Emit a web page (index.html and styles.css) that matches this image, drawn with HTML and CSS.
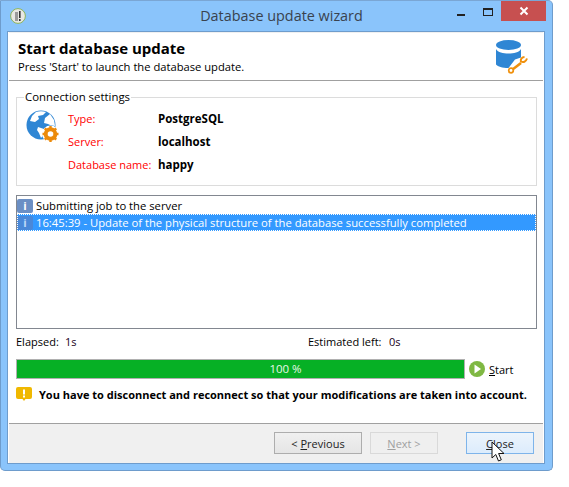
FILE: index.html
```html
<!DOCTYPE html>
<html lang="en">
<head>
  <meta charset="UTF-8">
  <title>Database update wizard</title>
  <link rel="stylesheet" href="styles.css">
</head>
<body>

<div class="window">
  <div class="titlebar">
    <div class="app-icon">
      <svg width="16" height="16" viewBox="0 0 16 16">
        <circle cx="8" cy="8" r="7.4" fill="#e8e8e4" stroke="#8cb45a" stroke-width="1"/>
        <path d="M5 4h3v9H5z" fill="#9a9a9a"/>
        <path d="M9 3h1.6v7H9zM9 11h1.6v2H9z" fill="#333"/>
      </svg>
    </div>
    <div class="title">Database update wizard</div>
    <div class="controls">
      <div class="ctl-min"></div>
      <div class="ctl-max"></div>
      <div class="ctl-close">
        <svg width="10" height="10" viewBox="0 0 10 10"><path d="M1.5 1.5l7 7M8.5 1.5l-7 7" stroke="#fff" stroke-width="2"/></svg>
      </div>
    </div>
  </div>

  <div class="client">
    <div class="header">
      <div>
        <h1>Start database update</h1>
        <p>Press 'Start' to launch the database update.</p>
      </div>
      <svg class="db-icon" width="32" height="34" viewBox="0 0 32 34">
        <ellipse cx="12.500" cy="5" rx="12.500" ry="5" fill="#2f86d4"/>
        <path d="M0 9C2 12.500 7 13.500 12.500 13.500S23 12.500 25 9V17.500L19 19.500 12.500 28C6 28 2 26.500 0 24.500z" fill="#2f86d4"/>
        <path d="M25 23L16.500 29.500" stroke="#f0900c" stroke-width="2.600"/>
        <path d="M28.500 17c-2.500.2-4.200 2-3.600 4.500 2.300 1.300 5 .3 6.100-3" fill="none" stroke="#f0900c" stroke-width="2"/>
        <circle cx="15" cy="30.500" r="2.300" fill="#fff" stroke="#f0900c" stroke-width="1.700"/>
      </svg>
    </div>

    <div class="content">
      <fieldset class="connection">
        <legend>Connection settings</legend>
        <svg class="globe" width="33" height="33" viewBox="0 0 33 33">
          <circle cx="15" cy="15" r="14.500" fill="#2f86d4"/>
          <path d="M10 2c3-1 7-1 10 0l-3 3-5 1 1 3-4 3-5-1 2-5zM19 8l5-4 4 6 1 6-5-1-2-1-4-1zM12 17l6 2 1 4-4 5-2-5-2-3z" fill="#fff"/>
          <circle cx="24.500" cy="24" r="8.500" fill="#fff"/>
          <circle cx="24.500" cy="24" r="5" fill="none" stroke="#ec8a0a" stroke-width="3.600"/>
          <path d="M24.500 16v16M16.500 24h16M18.800 18.300l11.400 11.400M30.200 18.300L18.800 29.700" stroke="#ec8a0a" stroke-width="2.400"/>
          <circle cx="24.500" cy="24" r="2.800" fill="#fff"/>
        </svg>
        <div class="fields">
          <span class="label">Type:</span><span class="value">PostgreSQL</span>
          <span class="label">Server:</span><span class="value">localhost</span>
          <span class="label">Database name:</span><span class="value">happy</span>
        </div>
      </fieldset>

      <div class="log">
        <div class="log-row">
          <span class="info-icon">i</span>
          <span>Submitting job to the server</span>
        </div>
        <div class="log-row selected">
          <span class="info-icon">i</span>
          <span>16:45:39 - Update of the physical structure of the database successfully completed</span>
        </div>
      </div>

      <div class="times">
        <span class="time-label">Elapsed:</span><span class="time-value elapsed">1s</span>
        <span class="time-label time-left">Estimated left:</span><span class="time-value">0s</span>
      </div>

      <div class="progress-row">
        <div class="progress">100 %</div>
        <div class="start">
          <svg width="16" height="16" viewBox="0 0 16 16">
            <circle cx="8" cy="8" r="8" fill="#7fb843"/>
            <path d="M5.500 3.500L12 8l-6.500 4.500z" fill="#fff"/>
          </svg>
          <span><u>S</u>tart</span>
        </div>
      </div>

      <div class="warning">
        <svg width="16" height="14" viewBox="0 0 16 14">
          <path d="M2 0h12a2 2 0 0 1 2 2v8a2 2 0 0 1-2 2H9.500L8 14l-1.500-2H2a2 2 0 0 1-2-2V2a2 2 0 0 1 2-2z" fill="#f0b800"/>
          <path d="M7 2.500h2V7.500H7zM7 8.500h2v2H7z" fill="#fff"/>
        </svg>
        <span>You have to disconnect and reconnect so that your modifications are taken into account.</span>
      </div>
    </div>

    <div class="footer">
      <button class="btn btn-prev">&lt; <u>P</u>revious</button>
      <button class="btn btn-next" disabled><u>N</u>ext &gt;</button>
      <button class="btn btn-close"><u>C</u>lose</button>
    </div>

    <svg class="cursor" width="14" height="22" viewBox="0 0 14 22">
      <path d="M1 1v16l3.800-3.500 2.700 6.500 2.800-1.200-2.700-6.300H13z" fill="#fff" stroke="#111" stroke-width="1"/>
    </svg>
  </div>
</div>

</body>
</html>
```

FILE: styles.css
```css
* {
  box-sizing: border-box;
}
body {
  margin: 0;
  background: #fff;
  font-family: 'Open Sans', 'Noto Sans', sans-serif;
  font-size: 11px;
  color: #000;
}
.window {
  width: 553px;
  height: 471px;
  background: #8ac4fb;
  border: 1px solid #6e9ccc;
  border-top-color: #7aa6d4;
  border-radius: 0 5px 5px 5px;
  display: flex;
  flex-direction: column;
}
.titlebar {
  height: 30px;
  display: flex;
  position: relative;
  flex-shrink: 0;
}
.app-icon {
  padding: 7px 0 0 9px;
  width: 26px;
}
.title {
  flex: 1;
  text-align: center;
  font-size: 14.400px;
  line-height: 30px;
  color: #39424e;
  padding-right: 16px;
}
.controls {
  position: absolute;
  top: 0;
  right: 6px;
  display: flex;
}
.ctl-min {
  width: 8px;
  height: 2px;
  background: #222;
  margin: 13px 18px 0 0;
}
.ctl-max {
  width: 10px;
  height: 8px;
  border: 1px solid #222;
  border-top-width: 2px;
  margin: 7px 8px 0 0;
}
.ctl-close {
  width: 45px;
  height: 20px;
  background: #c75050;
  display: flex;
  align-items: center;
  justify-content: center;
}
.client {
  flex: 1;
  margin: 0 7px 6px 6px;
  border: 1px solid #6e9ccc;
  background: #fff;
  display: flex;
  flex-direction: column;
  position: relative;
}
.header {
  height: 49px;
  margin: 0 1px;
  border-top: 1px solid #f0f0f0;
  border-bottom: 1px solid #a0a0a0;
  padding: 5px 0 0 9px;
  display: flex;
  justify-content: space-between;
}
.header h1 {
  margin: 0;
  font-size: 15px;
  line-height: 21px;
  font-weight: 700;
}
.header p {
  margin: 0;
  font-size: 11.200px;
  line-height: 16px;
}
.db-icon {
  margin: 2px 15px 0 0;
}
.content {
  flex: 1;
  padding: 9px 7px 0 8px;
}
.connection {
  margin: 0;
  height: 96px;
  padding: 0 0 0 9px;
  border: 1px solid #dcdcdc;
  display: flex;
  align-items: flex-start;
}
.connection legend {
  padding: 0 1px;
  margin-left: -2px;
  font-size: 11.400px;
  line-height: 14px;
}
.globe {
  margin-top: 6px;
  flex-shrink: 0;
}
.fields {
  display: grid;
  grid-template-columns: 90px auto;
  grid-auto-rows: 23px;
  margin-left: 9px;
  line-height: 23px;
  margin-top: 3px;
}
.label {
  color: #ff0000;
}
.value {
  font-size: 11.500px;
  font-weight: 700;
}
.log {
  height: 134px;
  margin-top: 9px;
  border: 1px solid #828790;
  padding: 1px 0 0;
}
.log-row {
  height: 17px;
  display: flex;
  align-items: center;
  gap: 3px;
  white-space: nowrap;
  font-size: 11.250px;
  line-height: 17px;
}
.selected {
  background: #3399ff;
  color: #fff;
  outline: 1px dotted #fff;
  outline-offset: -1px;
}
.info-icon {
  width: 16px;
  height: 14px;
  background: #6b8fc4;
  border-radius: 2px;
  color: #fff;
  font-weight: 700;
  text-align: center;
  line-height: 14px;
  flex-shrink: 0;
}
.selected .info-icon {
  background: #4a88d8;
  color: #bcd8f8;
}
.times {
  display: flex;
  height: 30px;
  padding-top: 5px;
  line-height: 16px;
}
.time-label {
  width: 49px;
}
.time-value {
  color: #200020;
}
.elapsed {
  width: 243px;
}
.time-left {
  width: 81px;
}
.progress-row {
  display: flex;
  align-items: center;
  height: 20px;
}
.progress {
  width: 449px;
  height: 20px;
  padding-left: 90px;
  background: #06b025;
  border: 1px solid #b0b0b0;
  color: #e8f8e8;
  font-size: 11.500px;
  text-align: center;
  line-height: 18px;
}
.start {
  display: flex;
  align-items: center;
  gap: 4px;
  margin-left: 4px;
}
.warning {
  display: flex;
  align-items: center;
  gap: 7px;
  height: 14px;
  margin-top: 8px;
  font-weight: 700;
  white-space: nowrap;
}
.footer {
  height: 40px;
  margin: 0 1px;
  background: #f0f0f0;
  border-top: 1px solid #a0a0a0;
  display: flex;
  padding: 8px 9px 0 0;
  justify-content: flex-end;
}
.btn {
  height: 22px;
  width: 68px;
  font-family: inherit;
  font-size: 11px;
  padding: 0;
  border: 1px solid #adadad;
  background: linear-gradient(#f0f0f0, #e5e5e5);
  color: #222;
}
.btn-prev {
  width: 88px;
  margin-right: 8px;
}
.btn-next {
  margin-right: 28px;
  border-color: #d9d9d9;
  background: #efefef;
  color: #a0a0a0;
}
.btn-close {
  border-color: #7eb4ea;
  background: linear-gradient(#ecf4fc, #dcecfc);
}
.cursor {
  position: absolute;
  left: 483px;
  bottom: 0;
}
```
